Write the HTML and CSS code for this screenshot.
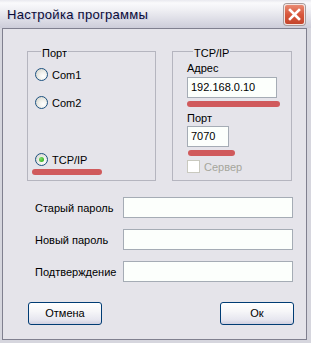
FILE: index.html
```html
<!DOCTYPE html>
<html>
<head lang="ru">
    <meta charset="UTF-8">
    <title>Настройка программы</title>
    <link rel="stylesheet" href="styles.css">
</head>
<body>
<div class="window">
    <div class="titlebar">
        <span class="title">Настройка программы</span>
        <span class="close">
            <svg width="19" height="19" viewBox="0 0 19 19">
                <path d="M5 5 L14 14 M14 5 L5 14" stroke="#fff" stroke-width="2.6" stroke-linecap="square"/>
            </svg>
        </span>
    </div>
    <div class="client">
        <div class="groups">
            <fieldset class="group group-port">
                <legend>Порт</legend>
                <label class="radio radio-com1"><span class="dot"></span>Com1</label>
                <label class="radio radio-com2"><span class="dot"></span>Com2</label>
                <label class="radio radio-tcp"><span class="dot checked"></span>TCP/IP</label>
                <div class="mark mark-tcp"></div>
            </fieldset>
            <fieldset class="group group-tcp">
                <legend>TCP/IP</legend>
                <div class="field-label first">Адрес</div>
                <div class="edit edit-addr">192.168.0.10</div>
                <div class="mark mark-addr"></div>
                <div class="field-label">Порт</div>
                <div class="edit edit-port">7070</div>
                <div class="mark mark-port"></div>
                <label class="check"><span class="box"></span>Сервер</label>
            </fieldset>
        </div>
        <div class="passwords">
            <div class="pass-label">Старый пароль</div>
            <div class="edit"></div>
            <div class="pass-label">Новый пароль</div>
            <div class="edit"></div>
            <div class="pass-label">Подтверждение</div>
            <div class="edit"></div>
        </div>
        <div class="buttons">
            <div class="button">Отмена</div>
            <div class="button">Ок</div>
        </div>
    </div>
</div>
</body>
</html>
```

FILE: styles.css
```css
html, body {
    margin: 0;
    padding: 0;
}
body {
    font-family: "Liberation Sans", Arial, sans-serif;
    font-size: 11px;
    color: #000;
    background: #d6d6de;
}
.window {
    width: 311px;
    height: 343px;
    box-sizing: border-box;
    background: #d6d6de;
    display: flex;
    flex-direction: column;
}
.titlebar {
    height: 28px;
    flex: none;
    display: flex;
    align-items: center;
    justify-content: space-between;
    padding: 0 6px 0 7px;
    background: linear-gradient(#e9e9ef 0, #fafafc 3px, #f1f1f5 9px, #e0e0e8 18px, #cdcdd9 28px);
    box-sizing: border-box;
}
.title {
    font-size: 13px;
    letter-spacing: 0.3px;
    color: #0a0a36;
    text-shadow: 1px 1px 0 #c8cde4;
    padding-top: 1px;
}
.close {
    width: 19px;
    height: 19px;
    border: 1px solid #f4e4e0;
    border-radius: 3px;
    background: linear-gradient(#e98a72, #d8573c 50%, #c4452b);
    box-shadow: 0 0 0 1px #a89a9a;
    display: flex;
}
.client {
    flex: 1;
    margin: 0 4px 3px 2px;
    border: 1px solid #80808f;
    background: #e5e4ea;
    padding: 14px 13px 0 24px;
}
.groups {
    display: flex;
    gap: 16px;
}
.group {
    margin: 0;
    padding: 0;
    border: 1px solid #b5b5bf;
    box-sizing: border-box;
    height: 138px;
    display: flex;
    flex-direction: column;
    align-items: flex-start;
}
.group legend {
    padding: 4px 1px 0;
    margin-left: 6px;
    line-height: 13px;
}
.group-port {
    width: 129px;
    padding-left: 7px;
}
.group-tcp {
    width: 120px;
    padding-left: 14px;
}
.radio {
    display: flex;
    align-items: center;
    gap: 3px;
    height: 13px;
}
.radio-com1 {
    margin-top: 8px;
}
.radio-com2 {
    margin-top: 15px;
}
.radio-tcp {
    margin-top: 44px;
}
.dot {
    width: 11px;
    height: 11px;
    border: 1px solid #1c5180;
    border-radius: 50%;
    background: radial-gradient(circle at 65% 65%, #fff 0, #f2f2ee 35%, #d4d4cc 90%);
    display: flex;
    align-items: center;
    justify-content: center;
    margin-right: 1px;
}
.dot.checked::after {
    content: "";
    width: 5px;
    height: 5px;
    border-radius: 50%;
    background: radial-gradient(circle at 35% 35%, #7ee06a, #21a10b);
}
.mark {
    height: 6px;
    border-radius: 3px;
    background: #d05a5c;
}
.mark-tcp {
    width: 70px;
    margin: 3px 0 0 -3px;
}
.field-label {
    line-height: 13px;
    margin-top: 5px;
}
.field-label.first {
    margin-top: 2px;
}
.edit {
    height: 21px;
    box-sizing: border-box;
    border: 1px solid #a5acb5;
    background: #fcfffc;
    padding: 0 3px;
    line-height: 19px;
}
.edit-addr {
    width: 90px;
    margin-top: 2px;
}
.edit-port {
    width: 42px;
    margin-top: 1px;
}
.mark-addr {
    width: 93px;
    margin-top: 3px;
}
.mark-port {
    width: 47px;
    margin: 3px 0 0 1px;
}
.check {
    display: flex;
    align-items: center;
    gap: 4px;
    margin-top: 4px;
    color: #a6a69c;
}
.box {
    width: 11px;
    height: 11px;
    border: 1px solid #c9c9bf;
    background: #fff;
}
.passwords {
    display: grid;
    grid-template-columns: 88px 170px;
    row-gap: 11px;
    align-items: center;
    padding-left: 8px;
    margin-top: 16px;
}
.buttons {
    display: flex;
    justify-content: space-between;
    margin: 20px -1px 0 1px;
}
.button {
    width: 74px;
    height: 23px;
    box-sizing: border-box;
    border: 1px solid #003c74;
    border-radius: 3px;
    background: linear-gradient(#ffffff, #f6f6f8 40%, #e6e6ef 80%, #d0d0e0);
    text-align: center;
    line-height: 21px;
}
```
